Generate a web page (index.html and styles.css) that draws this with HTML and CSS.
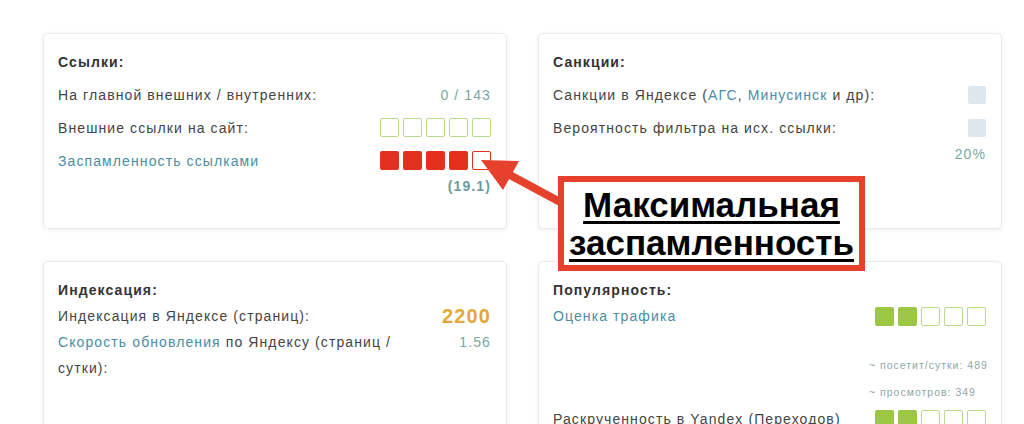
FILE: index.html
```html
<!DOCTYPE html>
<html lang="ru">
<head>
<meta charset="utf-8">
<title>Анализ сайта</title>
<link rel="stylesheet" href="styles.css">
</head>
<body>
<div class="page">
  <div class="grid">
    <section class="card card-top">
      <div class="line title">Ссылки:</div>
      <div class="line row">
        <span class="label">На главной внешних / внутренних:</span>
        <span class="value">0 / 143</span>
      </div>
      <div class="line row">
        <span class="label">Внешние ссылки на сайт:</span>
        <span class="boxes">
          <i class="sq g-o"></i><i class="sq g-o"></i><i class="sq g-o"></i><i class="sq g-o"></i><i class="sq g-o"></i>
        </span>
      </div>
      <div class="line row">
        <a class="label link">Заспамленность ссылками</a>
        <span class="boxes">
          <i class="sq r-f"></i><i class="sq r-f"></i><i class="sq r-f"></i><i class="sq r-f"></i><i class="sq r-o"></i>
        </span>
      </div>
      <div class="note bold-note">(19.1)</div>
    </section>

    <section class="card card-top">
      <div class="line title">Санкции:</div>
      <div class="line row">
        <span class="label">Санкции в Яндексе (<a class="link">АГС</a>, <a class="link">Минусинск</a> и др):</span>
        <i class="sq gray"></i>
      </div>
      <div class="line row">
        <span class="label">Вероятность фильтра на исх. ссылки:</span>
        <i class="sq gray"></i>
      </div>
      <div class="note pct">20%</div>
    </section>

    <section class="card card-bottom">
      <div class="bline title">Индексация:</div>
      <div class="bline row">
        <span class="label">Индексация в Яндексе (страниц):</span>
        <span class="big">2200</span>
      </div>
      <div class="bline row top">
        <span class="label wrap"><a class="link">Скорость обновления</a> по Яндексу (страниц / сутки):</span>
        <span class="value">1.56</span>
      </div>
    </section>

    <section class="card card-bottom">
      <div class="bline title">Популярность:</div>
      <div class="bline row">
        <a class="label link">Оценка трафика</a>
        <span class="boxes">
          <i class="sq g-f"></i><i class="sq g-f"></i><i class="sq g-o"></i><i class="sq g-o"></i><i class="sq g-o"></i>
        </span>
      </div>
      <div class="small-wrap">
        <div class="small">
          <div class="small-line">~ посетит/сутки: 489</div>
          <div class="small-line">~ просмотров: 349</div>
        </div>
      </div>
      <div class="bline row">
        <span class="label">Раскрученность в Yandex (Переходов)</span>
        <span class="boxes">
          <i class="sq g-f"></i><i class="sq g-f"></i><i class="sq g-o"></i><i class="sq g-o"></i><i class="sq g-o"></i>
        </span>
      </div>
    </section>
  </div>

  <svg class="arrow" width="1024" height="424" viewBox="0 0 1024 424" aria-hidden="true">
    <line x1="506" y1="173" x2="562" y2="203" stroke="#e5412d" stroke-width="8"/>
    <polygon points="481,160 519,161 503,190" fill="#e5412d"/>
  </svg>
  <div class="callout">
    <span class="callout-text">Максимальная</span>
    <span class="callout-text">заспамленность</span>
  </div>
</div>
</body>
</html>
```

FILE: styles.css
```css
html, body {
  margin: 0;
  padding: 0;
  background: #fff;
}

body {
  font-family: "Liberation Sans", Arial, sans-serif;
  font-size: 14px;
  color: #444;
  letter-spacing: 1.1px;
  overflow: hidden;
  height: 424px;
}

.page {
  position: relative;
  width: 1024px;
  height: 424px;
  overflow: hidden;
}

.grid {
  display: grid;
  grid-template-columns: 464px 464px;
  column-gap: 31px;
  row-gap: 32px;
  padding: 33px 0 0 43px;
}

.card {
  box-sizing: border-box;
  border: 1px solid #ebebeb;
  border-radius: 5px;
  box-shadow: 0 1px 4px rgba(0, 0, 0, 0.07);
  background: #fff;
  padding: 11px 15px 0 14px;
}

.card-top {
  height: 196px;
}

.card-bottom {
  height: 200px;
  padding-top: 15px;
}

.line {
  height: 33px;
  display: flex;
  align-items: center;
}

.bline {
  min-height: 26px;
  display: flex;
  align-items: center;
}

.row {
  justify-content: space-between;
}

.row.top {
  align-items: flex-start;
  line-height: 26px;
}

.title {
  font-weight: bold;
  color: #333;
}

.link {
  color: #4b8da3;
  text-decoration: none;
}

.value {
  color: #7aa79f;
}

.wrap {
  width: 345px;
}

.big {
  font-size: 20px;
  font-weight: bold;
  color: #e3a83a;
}

.note {
  text-align: right;
  color: #7aa79f;
}

.bold-note {
  line-height: 18px;
  font-weight: bold;
  color: #6f9a98;
}

.pct {
  line-height: 20px;
}

.boxes {
  display: flex;
  gap: 4px;
}

.sq {
  display: block;
  box-sizing: border-box;
  width: 19px;
  height: 19px;
  border-radius: 2px;
}

.g-o {
  border: 1.5px solid #bcd88c;
}

.g-f {
  background: #9cc745;
}

.r-f {
  background: #e4311f;
}

.r-o {
  border: 1.5px solid #e4311f;
}

.gray {
  width: 18px;
  height: 18px;
  background: #dfe7ee;
}

.small-wrap {
  display: flex;
  justify-content: flex-end;
  margin-top: 23px;
}

.small {
  width: 117px;
}

.small-line {
  font-size: 10.5px;
  line-height: 27px;
  letter-spacing: 1px;
  color: #8fa7a4;
  white-space: nowrap;
}

.arrow {
  position: absolute;
  left: 0;
  top: 0;
  pointer-events: none;
}

.callout {
  position: absolute;
  left: 558px;
  top: 176px;
  width: 307px;
  height: 95px;
  box-sizing: border-box;
  border: 6px solid #e5412d;
  background: #fff;
  padding-top: 4px;
  display: flex;
  flex-direction: column;
  align-items: center;
}

.callout-text {
  font-family: "Liberation Sans", Arial, sans-serif;
  font-weight: bold;
  font-size: 35px;
  line-height: 38px;
  letter-spacing: 0;
  color: #000;
  text-decoration: underline;
  text-decoration-thickness: 3px;
  text-underline-offset: 4px;
}
```
